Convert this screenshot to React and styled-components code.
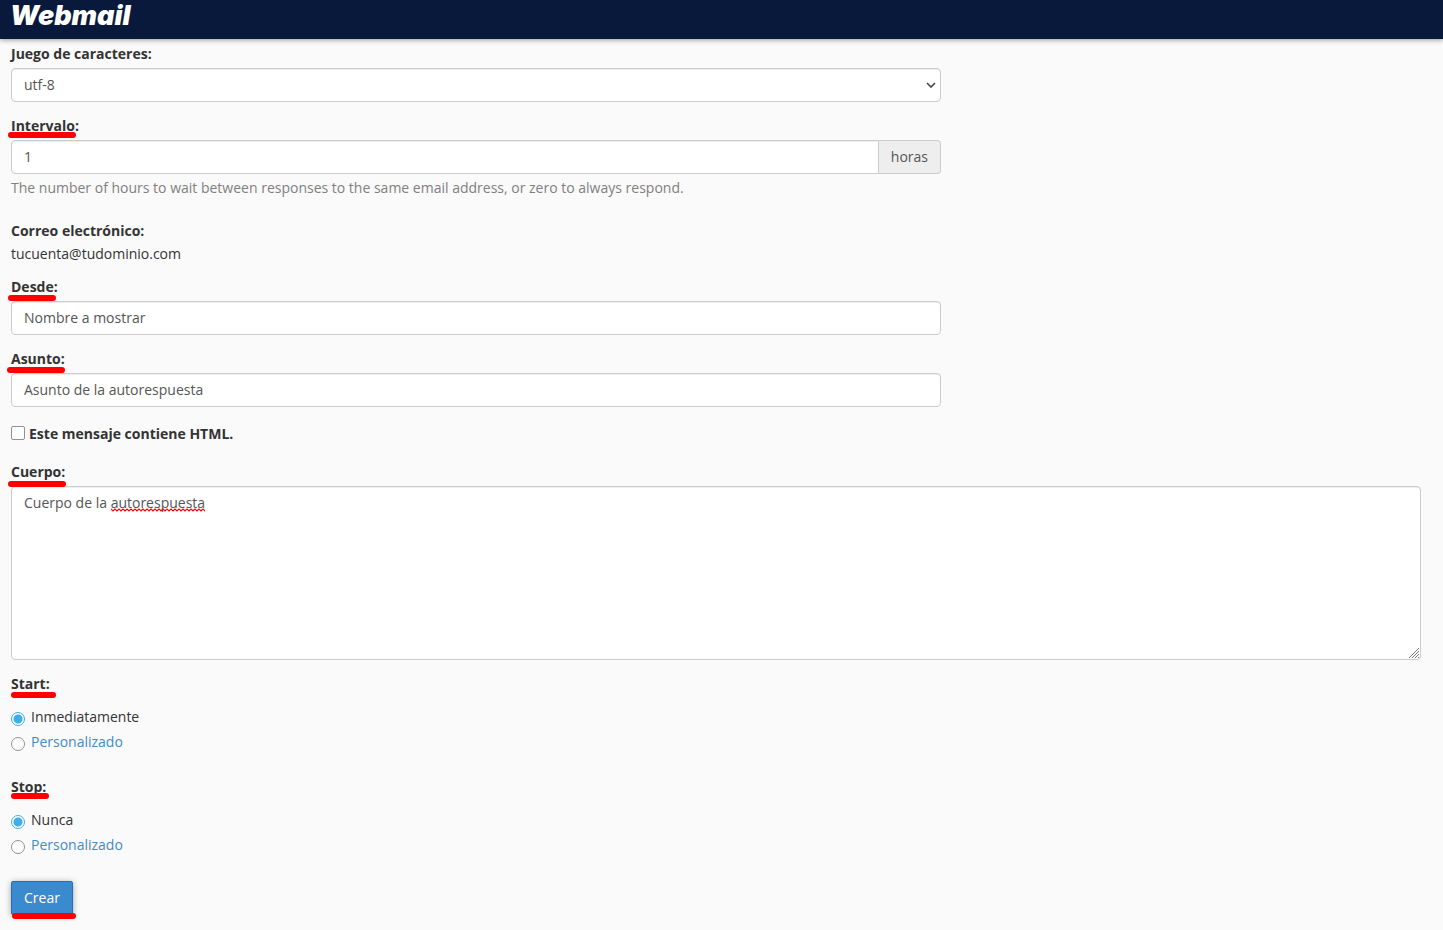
import React, { useState } from 'react'
import styled, { createGlobalStyle } from 'styled-components'

const App = () => {
  const [html, setHtml] = useState(false)
  const [start, setStart] = useState('now')
  const [stop, setStop] = useState('never')

  return (
    <>
      <GlobalStyle />
      <Header>
        <Logo href="#">Webmail</Logo>
      </Header>
      <Form onSubmit={e => e.preventDefault()}>
        <Group>
          <Label htmlFor="charset">Juego de caracteres:</Label>
          <SelectWrap>
            <Select id="charset" defaultValue="utf-8">
              <option value="utf-8">utf-8</option>
            </Select>
            <Chevron viewBox="0 0 10 6" aria-hidden="true">
              <path d="M1 1l4 4 4-4" />
            </Chevron>
          </SelectWrap>
        </Group>

        <Group $space={23}>
          <Label htmlFor="interval">
            Intervalo:
            <Mark $left={-3} $width={68} $top={16} />
          </Label>
          <InputGroup>
            <Input id="interval" type="text" defaultValue="1" />
            <Addon>horas</Addon>
          </InputGroup>
          <Help>The number of hours to wait between responses to the same email address, or zero to always respond.</Help>
        </Group>

        <Group $space={13}>
          <Heading $space={3}>Correo electrónico:</Heading>
          <Text>tucuenta@tudominio.com</Text>
        </Group>

        <Group>
          <Label htmlFor="from">
            Desde:
            <Mark $left={-3} $width={48} $top={18} />
          </Label>
          <Narrow>
            <Input id="from" type="text" defaultValue="Nombre a mostrar" />
          </Narrow>
        </Group>

        <Group $space={17}>
          <Label htmlFor="subject">
            Asunto:
            <Mark $left={-4} $width={58} $top={18} />
          </Label>
          <Narrow>
            <Input id="subject" type="text" defaultValue="Asunto de la autorespuesta" />
          </Narrow>
        </Group>

        <Group $space={18}>
          <CheckLabel>
            <Checkbox type="checkbox" checked={html} onChange={e => setHtml(e.target.checked)} />
            Este mensaje contiene HTML.
          </CheckLabel>
        </Group>

        <Group>
          <Label htmlFor="body">
            Cuerpo:
            <Mark $left={-3} $width={58} $top={19} />
          </Label>
          <BodyWrap>
            <TextArea id="body" rows={8} spellCheck={false} defaultValue="Cuerpo de la autorespuesta" />
            <Squiggle width="94" height="4" aria-hidden="true">
              <defs>
                <pattern id="wave" width="4" height="4" patternUnits="userSpaceOnUse">
                  <path d="M-1 2l1-1 2 2 2-2 1 1" />
                </pattern>
              </defs>
              <rect width="94" height="4" fill="url(#wave)" stroke="none" />
            </Squiggle>
            <Grip viewBox="0 0 12 12" aria-hidden="true">
              <path d="M1 11L11 1M4 11l7-7M7 11l4-4M10 11l1-1" />
            </Grip>
          </BodyWrap>
        </Group>

        <Group $space={25}>
          <Heading $space={13}>
            Start:
            <Mark $left={0} $width={45} $top={18} />
          </Heading>
          <Options role="radiogroup" aria-label="Start">
            <Option>
              <Radio type="radio" name="start" checked={start === 'now'} onChange={() => setStart('now')} />
              Inmediatamente
            </Option>
            <Option $link>
              <Radio type="radio" name="start" checked={start === 'custom'} onChange={() => setStart('custom')} />
              Personalizado
            </Option>
          </Options>
        </Group>

        <Group $space={26}>
          <Heading $space={13}>
            Stop:
            <Mark $left={0} $width={38} $top={16} />
          </Heading>
          <Options role="radiogroup" aria-label="Stop">
            <Option>
              <Radio type="radio" name="stop" checked={stop === 'never'} onChange={() => setStop('never')} />
              Nunca
            </Option>
            <Option $link>
              <Radio type="radio" name="stop" checked={stop === 'custom'} onChange={() => setStop('custom')} />
              Personalizado
            </Option>
          </Options>
        </Group>

        <Button type="submit">
          Crear
          <Mark $left={0} $width={64} $top={31} />
        </Button>
      </Form>
    </>
  )
}

export default App

const GlobalStyle = createGlobalStyle`
  * {
    box-sizing: border-box;
  }
  body {
    margin: 0;
    background: #fafafa;
    color: #333;
    font-family: "Open Sans", sans-serif;
    font-size: 14px;
    line-height: 20px;
  }
  input, select, textarea, button {
    font: inherit;
  }
`

const Header = styled.header`
  display: flex;
  height: 39px;
  padding-left: 10px;
  background: #08193c;
  box-shadow: 0 1px 5px rgba(0, 0, 0, 0.4);
`

const Logo = styled.a`
  color: #fff;
  font-family: Inter, sans-serif;
  font-size: 27px;
  font-style: italic;
  font-weight: 900;
  line-height: 31px;
  text-decoration: none;
`

const Form = styled.form`
  padding: 5px 22px 15px 11px;
`

const Group = styled.div`
  margin-bottom: ${({ $space = 14 }) => $space}px;
`

const Label = styled.label`
  display: block;
  position: relative;
  width: fit-content;
  margin-bottom: 4px;
  font-weight: 700;
`

const Heading = styled.div`
  position: relative;
  width: fit-content;
  margin-bottom: ${({ $space }) => $space}px;
  font-weight: 700;
`

/* red pen stroke lying over a label or a button */
const Mark = styled.span`
  position: absolute;
  z-index: 1;
  top: ${({ $top }) => $top}px;
  left: ${({ $left }) => $left}px;
  width: ${({ $width }) => $width}px;
  height: 6px;
  border-radius: 3px;
  background: #fe0000;
  pointer-events: none;
`

/* 8 of 12 columns with a 30px gutter */
const Narrow = styled.div`
  width: calc((100% + 30px) * 8 / 12 - 30px);
`

const SelectWrap = styled(Narrow)`
  position: relative;
`

const InputGroup = styled(Narrow)`
  display: flex;

  input {
    flex: 1;
    border-radius: 4px 0 0 4px;
  }
`

const Input = styled.input`
  display: block;
  width: 100%;
  min-width: 0;
  height: 34px;
  padding: 5px 12px 7px;
  border: 1px solid #ccc;
  border-radius: 4px;
  background: #fff;
  box-shadow: inset 0 1px 1px rgba(0, 0, 0, 0.075);
  color: #555;
`

const Select = styled(Input).attrs({ as: 'select' })`
  appearance: none;
  padding: 6px 12px;
`

const Chevron = styled.svg`
  position: absolute;
  top: 14px;
  right: 5px;
  width: 10px;
  height: 6px;
  fill: none;
  stroke: #444;
  stroke-width: 1.6;
  pointer-events: none;
`

const Addon = styled.span`
  padding: 6px 12px;
  border: 1px solid #ccc;
  border-left: 0;
  border-radius: 0 4px 4px 0;
  background: #eee;
  color: #555;
`

const Help = styled.p`
  margin: 4px 0 0;
  color: #808080;
`

const Text = styled.p`
  margin: 0;
`

const CheckLabel = styled.label`
  display: flex;
  align-items: flex-start;
  gap: 4px;
  width: fit-content;
  font-weight: 700;
`

const Checkbox = styled.input`
  appearance: none;
  width: 14px;
  height: 14px;
  margin: 2px 0 0;
  border: 1px solid #8f8f9d;
  border-radius: 2px;
  background: #fff;

  &:checked {
    background: #3daee9;
  }
`

const BodyWrap = styled.div`
  position: relative;
`

const TextArea = styled.textarea`
  display: block;
  width: 100%;
  padding: 6px 12px;
  border: 1px solid #ccc;
  border-radius: 4px;
  background: #fff;
  box-shadow: inset 0 1px 1px rgba(0, 0, 0, 0.075);
  color: #555;
  resize: none;
`

const Squiggle = styled.svg`
  position: absolute;
  top: 22px;
  left: 100px;
  fill: none;
  stroke: #f00000;
  stroke-width: 1.2;
  pointer-events: none;
`

const Grip = styled.svg`
  position: absolute;
  right: 1px;
  bottom: 1px;
  width: 12px;
  height: 12px;
  stroke: #777;
  stroke-width: 1;
  pointer-events: none;
`

const Options = styled.div`
  display: grid;
  gap: 5px;
`

const Option = styled.label`
  display: flex;
  align-items: flex-start;
  gap: 6px;
  width: fit-content;
  color: ${({ $link }) => ($link ? '#428bca' : 'inherit')};
`

const Radio = styled.input`
  appearance: none;
  width: 14px;
  height: 14px;
  margin: 5px 0 0;
  border: 1px solid #8f8f9d;
  border-radius: 50%;
  background: #fff;

  &:checked {
    border-color: #3daee9;
    background: radial-gradient(circle, #3daee9 4px, #fff 5px);
  }
`

const Button = styled.button`
  position: relative;
  height: 34px;
  padding: 6px 12px;
  border: 1px solid #2a6ead;
  border-radius: 2px;
  background: #3a8ad0;
  box-shadow: 0 1px 6px rgba(0, 0, 0, 0.35);
  color: #fff;
  cursor: pointer;
`
